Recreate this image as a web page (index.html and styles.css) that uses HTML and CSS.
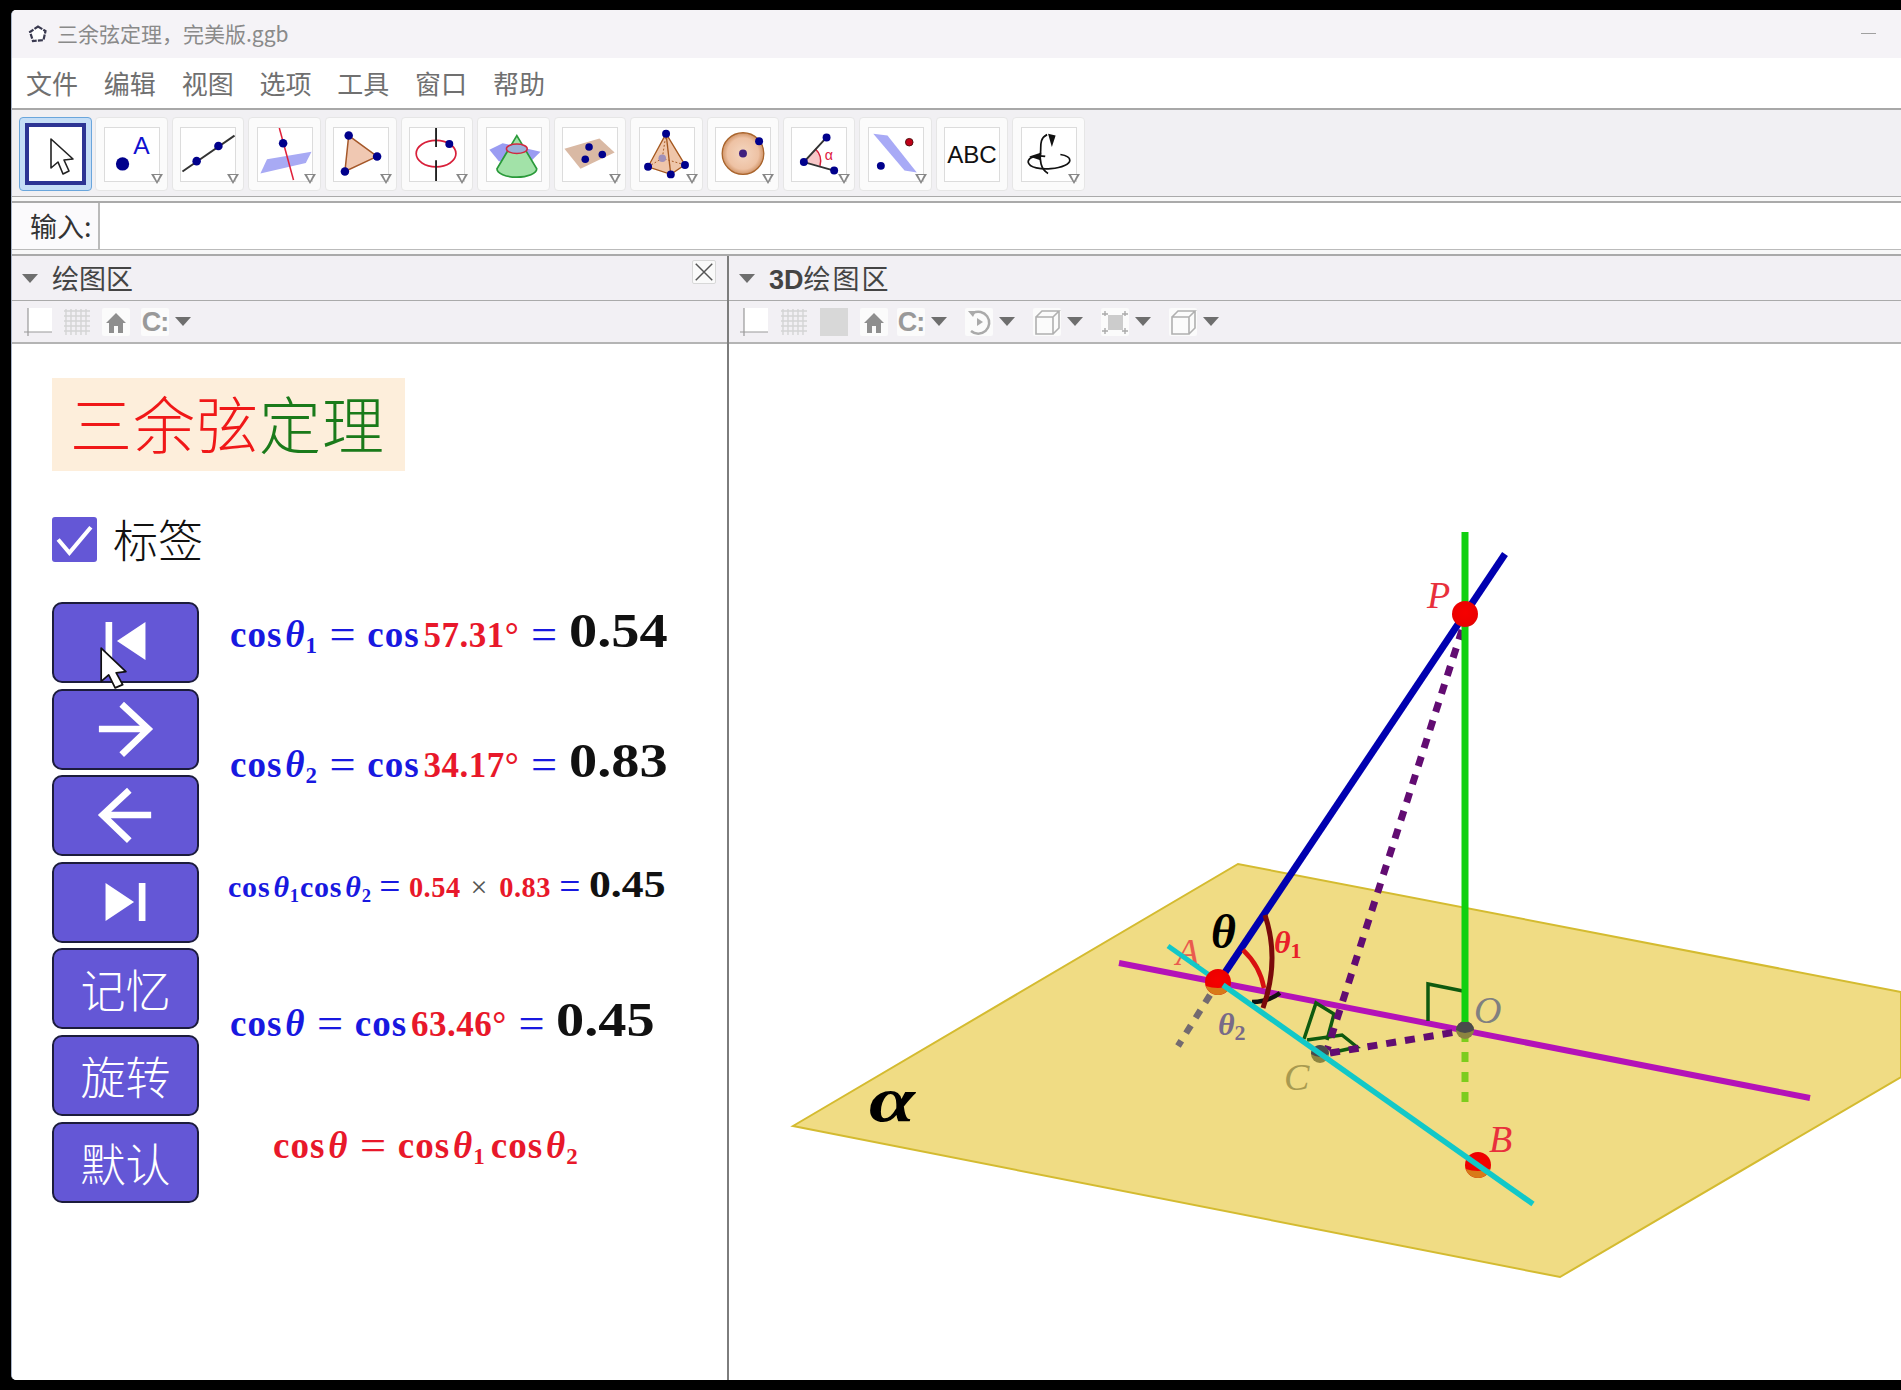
FILE: index.html
```html
<!DOCTYPE html>
<html lang="zh">
<head>
<meta charset="utf-8">
<title>三余弦定理，完美版.ggb</title>
<link rel="stylesheet" href="styles.css">
</head>
<body>
<div class="window">
  <header class="titlebar">
    <svg class="app-icon" viewBox="0 0 20 18"><path d="M10 1.5 17.5 6 15.5 15 5 16 2 7Z" fill="#fff" stroke="#3a3a50" stroke-width="2.2" stroke-dasharray="5 1.2"/></svg>
    <span class="title">三余弦定理，完美版.ggb</span>
    <span class="minimize"></span>
  </header>
  <nav class="menubar">
    <span>文件</span><span>编辑</span><span>视图</span><span>选项</span><span>工具</span><span>窗口</span><span>帮助</span>
  </nav>
  <div class="toolbar">
    <div class="tool selected"><div class="frame"><svg viewBox="0 0 53 54"><path d="M22 12V41L29 35 34 47 40 44 35 33 44 32Z" fill="#fff" stroke="#222" stroke-width="1.6" stroke-linejoin="round"/></svg></div></div>
    <div class="tool"><svg viewBox="0 0 56 56"><circle cx="18" cy="38" r="7" fill="#00008c"/><text x="38" y="27.5" class="t-a">A</text></svg><i class="mark"></i></div>
    <div class="tool"><svg viewBox="0 0 56 56"><path d="M1 46 56 8" stroke="#333" stroke-width="2"/><circle cx="16" cy="35" r="4.5" class="pt"/><circle cx="39" cy="19" r="4.5" class="pt"/></svg><i class="mark"></i></div>
    <div class="tool"><svg viewBox="0 0 56 56"><path d="M9 33 56 25 50 37 2 48Z" fill="#a8aaf4"/><path d="M22 0 37 55" stroke="#e0203a" stroke-width="1.6"/><circle cx="26" cy="16" r="4.5" class="pt"/></svg><i class="mark"></i></div>
    <div class="tool"><svg viewBox="0 0 56 56"><path d="M15 8 45 30 11 46Z" fill="#f0c8b2" stroke="#a5582a" stroke-width="1.6"/><circle cx="15" cy="8" r="4.5" class="pt"/><circle cx="45" cy="30" r="4.5" class="pt"/><circle cx="11" cy="46" r="4.5" class="pt"/></svg><i class="mark"></i></div>
    <div class="tool"><svg viewBox="0 0 56 56"><ellipse cx="27" cy="27" rx="21" ry="14" fill="none" stroke="#d8203a" stroke-width="1.8"/><path d="M27 0V20M27 34V56" stroke="#222" stroke-width="2"/><circle cx="41" cy="17" r="4.2" class="pt"/></svg><i class="mark"></i></div>
    <div class="tool"><svg viewBox="0 0 56 56"><path d="M2 23 16 16 56 25 44 37 12 35Z" fill="#9a9cf2"/><path d="M31 8 52 43A21 9 0 0 1 10 43Z" fill="#a2e2a8" stroke="#2a9a3a" stroke-width="1.8"/><ellipse cx="31" cy="22" rx="11" ry="5" fill="#9ab0d8" stroke="#d02a40" stroke-width="1.6"/></svg></div>
    <div class="tool"><svg viewBox="0 0 56 56"><path d="M1 22 38 11 54 26 18 43Z" fill="#d9b9a4"/><circle cx="27" cy="20" r="4" class="pt"/><circle cx="41" cy="28" r="4" class="pt"/><circle cx="23" cy="33" r="4" class="pt"/></svg><i class="mark"></i></div>
    <div class="tool"><svg viewBox="0 0 56 56"><path d="M27 6 8 41 32 49 47 39Z" fill="#efc6aa" stroke="#a5581f" stroke-width="1.4"/><path d="M27 6 32 49" stroke="#a5581f" stroke-width="1.4"/><path d="M27 6 23 32M8 41 23 32 47 39" stroke="#a5581f" stroke-width="1" stroke-dasharray="2 2" fill="none"/><circle cx="23" cy="32" r="4" fill="#a090b8"/><circle cx="27" cy="6" r="4.2" class="pt"/><circle cx="8" cy="41" r="4.2" class="pt"/><circle cx="47" cy="39" r="4.2" class="pt"/><circle cx="32" cy="49" r="4.2" class="pt"/></svg><i class="mark"></i></div>
    <div class="tool"><svg viewBox="0 0 56 56"><defs><radialGradient id="sph"><stop offset="0" stop-color="#f4d6c0"/><stop offset=".75" stop-color="#eec2a4"/><stop offset="1" stop-color="#d09468"/></radialGradient></defs><circle cx="28" cy="27" r="22" fill="url(#sph)" stroke="#a9642c" stroke-width="1.4"/><circle cx="28" cy="27" r="4.2" fill="#40207f"/><circle cx="45" cy="14" r="4.2" class="pt"/></svg><i class="mark"></i></div>
    <div class="tool"><svg viewBox="0 0 56 56"><path d="M12 36 24 22A18 18 0 0 1 29 40Z" fill="#f8c8c8"/><path d="M24 22A18 18 0 0 1 29 40" fill="none" stroke="#d8203a" stroke-width="1.6"/><path d="M36 10 12 36 44 45" fill="none" stroke="#333" stroke-width="2"/><circle cx="36" cy="10" r="4.2" class="pt"/><circle cx="12" cy="36" r="4.2" class="pt"/><circle cx="44" cy="45" r="4.2" class="pt"/><text x="34" y="34" class="t-alpha">α</text></svg><i class="mark"></i></div>
    <div class="tool"><svg viewBox="0 0 56 56"><path d="M4 6 19 8 50 47 37 45Z" fill="#a8aaf6"/><circle cx="42" cy="15" r="4" fill="#c00018" stroke="#501010"/><circle cx="12" cy="40" r="4.2" class="pt"/></svg><i class="mark"></i></div>
    <div class="tool"><svg viewBox="0 0 56 56"><text x="28" y="37" class="t-abc">ABC</text></svg></div>
    <div class="tool"><svg viewBox="0 0 56 56"><path d="M26 7C17 11 20 21 19 26 18 33 19 44 27 48" fill="none" stroke="#111" stroke-width="1.8"/><path d="M27 6 31 20 35 8Z" fill="#111"/><path d="M24 30C12 28 6 32 6 36 7 42 20 44 30 43 42 42 50 38 50 34 50 31 46 29 40 28" fill="none" stroke="#111" stroke-width="1.8"/><path d="M20 26 7 30 19 34Z" fill="#111"/></svg><i class="mark"></i></div>
  </div>
  <div class="strip"></div>
  <div class="inputbar">
    <label class="input-label">输入:</label>
    <div class="input-box"></div>
  </div>
  <div class="strip"></div>
  <main class="workspace">
    <section class="panel-left">
      <div class="panel-head">
        <i class="caret"></i><span class="panel-name">绘图区</span>
        <button class="close" aria-label="关闭"><svg viewBox="0 0 24 24"><path d="M3 3 21 21M21 3 3 21" stroke="#555" stroke-width="1.6"/></svg></button>
      </div>
      <div class="subbar">
        <svg class="ico" viewBox="0 0 28 28"><use href="#axes"/></svg>
        <svg class="ico blank" viewBox="0 0 28 28"><use href="#gridico"/></svg>
        <svg class="ico whitebg" viewBox="0 0 28 28"><use href="#home"/></svg>
        <span class="ico whitebg cc">C:</span><i class="caret small"></i>
      </div>
      <div class="canvas">
        <div class="banner"><span class="r">三</span><span class="r">余</span><span class="r">弦</span><span class="g">定</span><span class="g">理</span></div>
        <div class="check-row">
          <span class="check"><svg viewBox="0 0 44 44"><path d="M6 22 17 35 38 10" fill="none" stroke="#fff" stroke-width="4"/></svg></span>
          <span class="check-label">标签</span>
        </div>
        <div class="controls">
          <div class="buttons">
            <button class="gbtn"><svg viewBox="0 0 146 81"><path d="M52 19H59V59H52ZM94 19V59L64 39Z" fill="#fff"/></svg></button>
            <button class="gbtn"><svg viewBox="0 0 146 81"><path d="M45 40H96M69 14 97 40 69 67" fill="none" stroke="#fff" stroke-width="7"/></svg></button>
            <button class="gbtn"><svg viewBox="0 0 146 81"><path d="M100 40H49M77 14 49 40 77 67" fill="none" stroke="#fff" stroke-width="7"/></svg></button>
            <button class="gbtn"><svg viewBox="0 0 146 81"><path d="M52 20 82 40 52 60ZM87 20H94V60H87Z" fill="#fff"/></svg></button>
            <button class="gbtn">记忆</button>
            <button class="gbtn">旋转</button>
            <button class="gbtn">默认</button>
          </div>
          <div class="formulas">
            <div class="formula f1"><span class="bl">cos<i>θ</i><sub>1</sub><span class="eq">=</span>cos</span><span class="rd">57.31°</span><span class="bl eq">=</span><b class="num">0.54</b></div>
            <div class="formula f2"><span class="bl">cos<i>θ</i><sub>2</sub><span class="eq">=</span>cos</span><span class="rd">34.17°</span><span class="bl eq">=</span><b class="num">0.83</b></div>
            <div class="formula f3"><span class="bl">cos<i>θ</i><sub>1</sub>cos<i>θ</i><sub>2</sub><span class="eq">=</span></span><span class="rd">0.54</span><span class="times">×</span><span class="rd">0.83</span><span class="bl eq eq-last">=</span><b class="num">0.45</b></div>
            <div class="formula f4"><span class="bl">cos<i>θ</i><span class="eq">=</span>cos</span><span class="rd">63.46°</span><span class="bl eq">=</span><b class="num">0.45</b></div>
            <div class="formula f5"><span class="rdw">cos<i>θ</i><span class="eq">=</span>cos<i>θ</i><sub>1</sub><span class="gap"></span>cos<i>θ</i><sub>2</sub></span></div>
          </div>
        </div>
        <svg class="cursor" viewBox="0 0 26 40"><path d="M2 1V32L9 26 15 38 22 35 16 24 25 23Z" fill="#fff" stroke="#111" stroke-width="1.6" stroke-linejoin="round"/></svg>
      </div>
    </section>
    <section class="panel-right">
      <div class="panel-head">
        <i class="caret"></i><span class="panel-name name-3d"><b>3D</b>绘图区</span>
      </div>
      <div class="subbar sub3d">
        <svg class="ico" viewBox="0 0 28 28"><use href="#axes"/></svg>
        <svg class="ico blank" viewBox="0 0 28 28"><use href="#gridico"/></svg>
        <span class="ico swatch"></span>
        <svg class="ico whitebg" viewBox="0 0 28 28"><use href="#home"/></svg>
        <span class="ico whitebg cc">C:</span><i class="caret small"></i>
        <svg class="ico whitebg" viewBox="0 0 28 28"><path d="M8 5A11 11 0 1 1 6 23" fill="none" stroke="#aaa" stroke-width="2.5"/><path d="M3 3 11 3 8 9Z" fill="#aaa"/><path d="M12 10 18 14 12 18Z" fill="#aaa"/></svg><i class="caret small"></i>
        <svg class="ico whitebg" viewBox="0 0 28 28"><use href="#cube"/></svg><i class="caret small"></i>
        <svg class="ico whitebg" viewBox="0 0 28 28"><rect x="7" y="7" width="15" height="15" fill="#ccc"/><path d="M4 3V8M1 6H7M24 3V8M21 6H27M4 20V26M1 23H7M24 20V26M21 23H27" stroke="#aaa" stroke-width="1.4"/></svg><i class="caret small"></i>
        <svg class="ico whitebg" viewBox="0 0 28 28"><use href="#cube"/></svg><i class="caret small"></i>
      </div>
      <div class="view3d">
        <svg viewBox="729 344 1172 1036" class="scene">
          <defs>
            <radialGradient id="ballr" cx=".5" cy=".45" r=".6"><stop offset="0" stop-color="#f60000"/><stop offset=".8" stop-color="#ec0000"/><stop offset="1" stop-color="#c81010"/></radialGradient>
          </defs>
          <path d="M793 1126 1238 864 1901 992V1077L1560 1277Z" fill="#f0dc84" stroke="#d4bb30" stroke-width="2"/>
          <text x="869" y="1121" class="lb-alpha" textLength="46" lengthAdjust="spacingAndGlyphs">α</text>
          <text x="1176" y="965" class="lb lb-a">A</text>
          <text x="1218" y="1035" class="lb-th lb-t2">θ<tspan dy="5" class="tsub">2</tspan></text>
          <path d="M1210 995 1178 1046" stroke="#736a70" stroke-width="6.5" stroke-dasharray="9 9" fill="none"/>
          <path d="M1119 963 1810 1098" stroke="#b412b8" stroke-width="6"/>
          <path d="M1168 946 1222 984" stroke="#12c8c8" stroke-width="5"/>
          <path d="M1465 1032V1108" stroke="#7ccc1e" stroke-width="7" stroke-dasharray="10 10"/>
          <path d="M1428 1021V984L1463 991" fill="none" stroke="#0f5a0f" stroke-width="3.5"/>
          <path d="M1304 1039 1316 1003 1334 1014 1327 1040" fill="none" stroke="#0f5a0f" stroke-width="3.5"/>
          <path d="M1307 1040 1342 1035 1357 1047 1330 1053" fill="none" stroke="#0f5a0f" stroke-width="3.5"/>
          <path d="M1462 630 1327 1050" stroke="#620c72" stroke-width="7" stroke-dasharray="10 9"/>
          <path d="M1330 1053 1456 1032" stroke="#620c72" stroke-width="7" stroke-dasharray="10 9"/>
          <circle cx="1465" cy="1030" r="9" fill="#8c8440"/>
          <path d="M1456 1030A9 9 0 0 1 1474 1030Q1465 1036 1456 1030Z" fill="#4a4a4c"/>
          <circle cx="1320" cy="1054" r="9" fill="#8c8440"/>
          <path d="M1311 1054A9 9 0 0 1 1329 1054Q1320 1060 1311 1054Z" fill="#4a4a4c"/>
          <path d="M1465 532V1022" stroke="#10d010" stroke-width="7"/>
          <path d="M1222 977 1505 554" stroke="#0000b0" stroke-width="7"/>
          <path d="M1243 950Q1260 966 1264 988" fill="none" stroke="#d81010" stroke-width="4.5"/>
          <path d="M1252 1002Q1268 1002 1280 993" fill="none" stroke="#111" stroke-width="4.5"/>
          <path d="M1265 915Q1280 960 1263 1008" fill="none" stroke="#7a0a0a" stroke-width="5"/>
          <circle cx="1218" cy="982" r="13" fill="url(#ballr)"/>
          <path d="M1205.600 986A13 13 0 0 0 1230.400 986Q1218 990 1205.600 986Z" fill="#d87a18"/>
          <circle cx="1478" cy="1165" r="13" fill="url(#ballr)"/>
          <path d="M1465.600 1169A13 13 0 0 0 1490.400 1169Q1478 1173 1465.600 1169Z" fill="#d87a18"/>
          <circle cx="1465" cy="614" r="13" fill="url(#ballr)"/>
          <path d="M1223 985 1533 1204" stroke="#12c8c8" stroke-width="5.5"/>
          <text x="1427" y="608" class="lb lb-p">P</text>
          <text x="1474" y="1023" class="lb lb-o">O</text>
          <text x="1284" y="1090" class="lb lb-c">C</text>
          <text x="1489" y="1152" class="lb lb-b">B</text>
          <text x="1211" y="948" class="lb-big">θ</text>
          <text x="1274" y="953" class="lb-th lb-t1">θ<tspan dy="5" class="tsub">1</tspan></text>
        </svg>
      </div>
    </section>
  </main>
</div>
<svg class="defs" aria-hidden="true">
  <defs>
    <g id="axes"><rect x="4" width="24" height="24" fill="#fff"/><path d="M4 0V28M0 24H28" stroke="#999" stroke-width="1.2"/></g>
    <g id="gridico"><path d="M3 1V27M8 1V27M13 1V27M18 1V27M23 1V27M1 3H27M1 8H27M1 13H27M1 18H27M1 23H27" stroke="#d4d4d4" stroke-width="1.4"/></g>
    <path id="home" d="M14 5 24 15H21V25H16V18H12V25H7V15H4Z" fill="#8e8e8e"/>
    <g id="cube" fill="none" stroke="#b0b0b0" stroke-width="1.6"><path d="M3 9H20V26H3ZM3 9 9 3H26L20 9M26 3V20L20 26"/></g>
  </defs>
</svg>
</body>
</html>
```

FILE: styles.css
```css
* { box-sizing: border-box; }
html, body { margin: 0; height: 100%; }
body { background: #000; overflow: hidden; font-family: "Noto Sans CJK SC", "Liberation Sans", sans-serif; }
.defs { position: absolute; width: 0; height: 0; }

.window { margin: 10px 0 0 11px; width: 1890px; height: 1370px; background: #fff; display: flex; flex-direction: column; border-left: 1px solid #a8b4c8; border-radius: 5px 0 0 5px; overflow: hidden; }

.titlebar { height: 48px; flex: none; background: #f5f3f7; display: flex; align-items: center; padding: 0 0 0 16px; color: #8a8a8a; font-size: 21px; }
.app-icon { width: 20px; height: 18px; margin-right: 9px; }
.title { flex: 1; position: relative; top: -1px; }
.minimize { width: 15px; height: 1px; background: #a0a0a0; margin-right: 25px; position: relative; top: -1px; }

.menubar { height: 52px; flex: none; background: #fff; border-bottom: 2px solid #a8a8a8; display: flex; gap: 25.8px; padding-left: 14px; align-items: center; font-size: 26px; color: #707070; }
.menubar span { line-height: 50px; }

.toolbar { height: 87px; flex: none; background: #f1f0f3; border-bottom: 1px solid #aaa; padding: 7px 0 0 7px; display: flex; gap: 3.9px; }
.tool { width: 72.5px; height: 74px; background: #fbfbfb; border: 1px solid #e6e6e6; border-radius: 4px; position: relative; padding: 9px 0 0 7.5px; }
.tool svg { width: 56px; height: 55px; border: 1px solid #dcdcdc; background: #fff; display: block; overflow: hidden; }
.tool svg .pt, .pt { fill: #00008c; }
.tool.selected { background: #c6def6; border-color: #6aa6dc; padding: 5px 0 0 5px; }
.frame { width: 61px; height: 62px; border: 4px solid #2d3494; background: #fff; }
.tool.selected svg { width: 53px; height: 54px; border: 0; }
.mark { position: absolute; right: 4px; bottom: 6px; width: 0; height: 0; border-left: 6px solid transparent; border-right: 6px solid transparent; border-top: 10px solid #888; }
.mark::after { content: ""; position: absolute; left: -3px; top: -9px; border-left: 3px solid transparent; border-right: 3px solid transparent; border-top: 6px solid #fff; }
.t-a { font: 400 26px "Liberation Sans", sans-serif; fill: #1010d0; text-anchor: middle; }
.t-abc { font: 400 25.5px "Liberation Sans", sans-serif; fill: #111; text-anchor: middle; }
.t-alpha { font: 400 15px "Liberation Sans", sans-serif; fill: #e02040; }

.strip { height: 6px; flex: none; background: #f8f8f8; border-bottom: 2px solid #aaa; }
.inputbar { height: 47px; flex: none; display: flex; background: #fbfafc; border-bottom: 1px solid #bbb; }
.input-label { width: 86px; padding-left: 18px; font-size: 27px; line-height: 46px; color: #333; }
.input-box { flex: 1; background: #fff; border-left: 2px solid #bbb; }

.workspace { flex: 1; display: flex; min-height: 0; }
.panel-left { width: 715px; flex: none; display: flex; flex-direction: column; }
.panel-right { flex: 1; display: flex; flex-direction: column; border-left: 2px solid #7d7d7d; }

.panel-head { height: 45px; flex: none; background: #f2f0f4; border-bottom: 1px solid #aaa; display: flex; align-items: center; padding-left: 10px; position: relative; }
.panel-name { font-size: 27px; color: #444; margin-left: 14px; line-height: 44px; }
.name-3d { letter-spacing: 2px; }
.panel-name b { font: 700 27px "Liberation Sans", sans-serif; letter-spacing: 0; }
.caret { width: 0; height: 0; border-left: 8px solid transparent; border-right: 8px solid transparent; border-top: 9px solid #6e6e6e; flex: none; }
.caret.small { margin-left: 5px; }
.close { position: absolute; right: 11px; top: 4px; width: 24px; height: 24px; padding: 0; background: #fafafa; border: 1px solid #d8d8d8; border-radius: 2px; }
.close svg { display: block; width: 22px; height: 22px; }

.subbar { height: 43px; flex: none; background: #f2f0f4; border-bottom: 2px solid #b4b4b4; display: flex; align-items: center; padding-left: 12px; }
.ico { width: 28px; height: 28px; flex: none; margin-right: 11px; display: block; }
.ico + .caret.small { margin-left: -5px; }
.whitebg { background: #fbfbfb; border-radius: 2px; }
.cc { font: 700 27px/28px "Liberation Sans", sans-serif; color: #999; text-align: center; letter-spacing: -1px; }
.swatch { background: #d8d8d8; }
.sub3d { padding-left: 11px; }
.sub3d .ico { margin-right: 12px; }
.sub3d .cc { margin-left: -3px; }
.sub3d .ico + .caret.small { margin-left: -6px; margin-right: 18px; }

.canvas { flex: 1; background: #fff; position: relative; padding: 34px 0 0 40px; }
.banner { width: 353px; height: 93px; background: #fdeedb; display: flex; gap: 1px; padding-left: 18px; font-size: 62px; line-height: 88px; font-weight: 300; }
.banner .r { color: #f01818; }
.banner .g { color: #1a7a1a; }
.check-row { display: flex; align-items: center; gap: 16px; margin-top: 46px; height: 44px; }
.check { width: 45px; height: 45px; background: #6457d6; border-radius: 3px; display: block; }
.check svg { display: block; }
.check-label { font-size: 45px; line-height: 44px; color: #111; font-weight: 300; }

.controls { display: flex; margin-top: 41px; }
.buttons { display: flex; flex-direction: column; gap: 5.6px; width: 147px; flex: none; }
.gbtn { height: 81px; padding: 0; background: #6457d6; border: 2px solid #1c1c3c; border-radius: 10px; color: #fff; font: 300 45px/1 "Noto Sans CJK SC", sans-serif; }
.gbtn svg { display: block; width: 143px; height: 77px; }

.formulas { margin-left: 31px; }
.formula { white-space: nowrap; font: 700 37px/50px "Liberation Serif", serif; letter-spacing: 1px; }
.formula i { font-style: italic; margin-left: 3px; }
.formula sub { font-size: .62em; line-height: 0; vertical-align: -.28em; }
.bl { color: #1818e0; }
.rd { color: #e8182a; font-size: .946em; letter-spacing: .5px; margin-left: 4px; }
.rdw { color: #e8182a; }
.eq { font-size: 1.25em; font-weight: 400; margin: 0 .25em; line-height: 0; letter-spacing: 0; position: relative; top: .06em; }
.num { display: inline-block; font-size: 49px; letter-spacing: 0; color: #111; transform: scaleX(1.15); transform-origin: left center; }
.gap { display: inline-block; width: 5px; }
.f1 { height: 130px; margin-top: 4px; }
.f2 { height: 123px; }
.f3 { height: 136px; font-size: 30px; margin-left: -2px; letter-spacing: .8px; }
.f3 .eq { margin: 0 .2em; }
.f3 .eq-last { margin: 0 .22em; }
.f3 .rd { margin-left: 1px; }
.f3 .times { margin: 0 10px; }
.f3 .num { font-size: 38px; }
.f4 { height: 126px; }
.f5 { margin-left: 43px; }
.times { color: #555; font-weight: 400; }

.cursor { position: absolute; left: 87px; top: 303px; width: 28px; height: 43px; }

.view3d { flex: 1; background: #fff; min-height: 0; }
.scene { display: block; width: 1172px; height: 1036px; }
.lb { font: italic 400 38px "Liberation Serif", serif; }
.lb-a { fill: #e8303c; opacity: .75; }
.lb-p, .lb-b { fill: #e8303c; }
.lb-o { fill: #808080; }
.lb-c { fill: #a89a50; }
.lb-big { font: italic 700 48px "Liberation Serif", serif; fill: #000; }
.lb-th { font: italic 700 32px "Liberation Serif", serif; }
.lb-t1 { fill: #e8202a; }
.lb-t2 { fill: #786a88; }
.tsub { font-size: 22px; font-style: normal; }
.lb-alpha { font: italic 700 64px "Liberation Serif", serif; fill: #000; }
```
